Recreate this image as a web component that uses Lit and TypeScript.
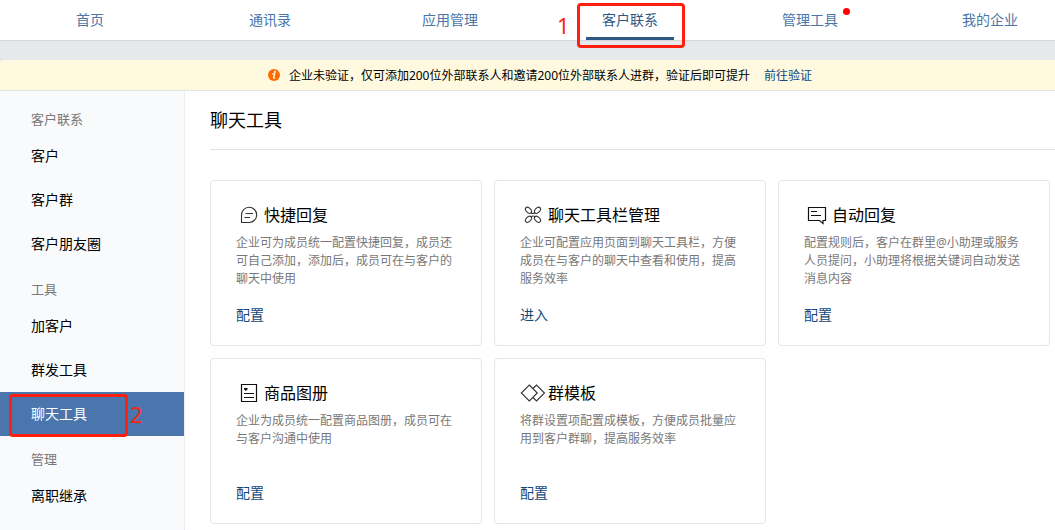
import { LitElement, html, css, svg, nothing, type TemplateResult } from "lit";
import { customElement, property } from "lit/decorators.js";
import { classMap } from "lit/directives/class-map.js";

type IconName = "reply" | "toolbar" | "auto" | "album" | "template";

interface Tool {
  icon: IconName;
  title: string;
  desc: string;
  action: string;
}

const TABS = ["首页", "通讯录", "应用管理", "客户联系", "管理工具", "我的企业"];
const ACTIVE_TAB = "客户联系";
const UNREAD_TAB = "管理工具";

const MENU = [
  { label: "客户联系", items: ["客户", "客户群", "客户朋友圈"] },
  { label: "工具", items: ["加客户", "群发工具", "聊天工具"] },
  { label: "管理", items: ["离职继承"] },
];
const ACTIVE_ITEM = "聊天工具";

const TOOLS: Tool[] = [
  {
    icon: "reply",
    title: "快捷回复",
    desc: "企业可为成员统一配置快捷回复，成员还可自己添加，添加后，成员可在与客户的聊天中使用",
    action: "配置",
  },
  {
    icon: "toolbar",
    title: "聊天工具栏管理",
    desc: "企业可配置应用页面到聊天工具栏，方便成员在与客户的聊天中查看和使用，提高服务效率",
    action: "进入",
  },
  {
    icon: "auto",
    title: "自动回复",
    desc: "配置规则后，客户在群里@小助理或服务人员提问，小助理将根据关键词自动发送消息内容",
    action: "配置",
  },
  {
    icon: "album",
    title: "商品图册",
    desc: "企业为成员统一配置商品图册，成员可在与客户沟通中使用",
    action: "配置",
  },
  {
    icon: "template",
    title: "群模板",
    desc: "将群设置项配置成模板，方便成员批量应用到客户群聊，提高服务效率",
    action: "配置",
  },
];

const ICONS: Record<IconName, TemplateResult<2>> = {
  reply: svg`
    <path d="M5.5 19.5V12a7.6 7.6 0 1 1 7.6 7.5Z" />
    <path d="M9.5 10.5h7.5M8.5 14.5h5.5" />`,
  toolbar: svg`
    <ellipse cx="8.5" cy="7.3" rx="3.6" ry="2.3" transform="rotate(45 8.5 7.3)" />
    <ellipse cx="17.5" cy="7.3" rx="3.6" ry="2.3" transform="rotate(-45 17.5 7.3)" />
    <ellipse cx="8.5" cy="16.3" rx="3.6" ry="2.3" transform="rotate(-45 8.5 16.3)" />
    <ellipse cx="17.5" cy="16.3" rx="3.6" ry="2.3" transform="rotate(45 17.5 16.3)" />
    <path d="M10.8 9.8q2.2 1.5 4.4 0M10.8 13.8q2.2-1.5 4.4 0" />`,
  auto: svg`
    <path class="dark" d="M4.5 4.5h17v13h-2.5v3l-3.5-3h-11Z" />
    <path class="dark" d="M7 8.5h6M7 12.5h10" />`,
  album: svg`
    <path class="dark" d="M5.5 3.5h15v17h-15Z" />
    <path class="dark" d="M8 12.5h10M8 16.5h10" />
    <path class="solid" d="M8 7h3.6v1.2l-1.8 1.8l-1.8-1.8Z" />`,
  template: svg`
    <path d="M9.3 4L17.3 12L9.3 20L1.3 12Z" />
    <path d="M13 7.5L16.5 4L24.5 12L16.5 20L13 16.5" />`,
};

@customElement("tool-card")
export class ToolCard extends LitElement {
  @property({ attribute: false }) tool!: Tool;

  static styles = css`
    :host {
      display: flex;
      flex-direction: column;
      box-sizing: border-box;
      padding: 22px 25px 20px;
      border: 1px solid #e4e6e9;
      border-radius: 4px;
      background: #fff;
    }
    .head {
      display: flex;
      align-items: center;
      height: 24px;
      margin-bottom: 7px;
    }
    .icon {
      flex: none;
      width: 28px;
      height: 24px;
      fill: none;
      stroke: #333;
      stroke-width: 1.1;
    }
    .dark {
      stroke: #111;
      stroke-width: 1.2;
    }
    .solid {
      fill: #111;
      stroke: none;
    }
    .title {
      margin: 0;
      font-size: 16px;
      font-weight: 400;
      line-height: 24px;
      color: #000;
    }
    .desc {
      margin: 0 0 17px;
      min-height: 54px;
      font-size: 12px;
      line-height: 18px;
      color: #787878;
    }
    .action {
      align-self: flex-start;
      font-size: 14px;
      line-height: 20px;
      color: #0d4a80;
      text-decoration: none;
    }
  `;

  render() {
    const { icon, title, desc, action } = this.tool;
    return html`
      <div class="head">
        <svg class="icon" viewBox="0 0 28 24" aria-hidden="true">${ICONS[icon]}</svg>
        <h2 class="title">${title}</h2>
      </div>
      <p class="desc">${desc}</p>
      <a class="action" href="#">${action}</a>
    `;
  }
}

@customElement("app-root")
export class AppRoot extends LitElement {
  static styles = css`
    :host {
      display: block;
      min-height: 100vh;
      overflow: hidden;
      background: #e7e8eb;
      font-family: "Noto Sans", "Noto Sans CJK SC", sans-serif;
      color: #000;
    }
    .page {
      display: flex;
      flex-direction: column;
      min-width: 1080px;
      min-height: 100vh;
    }
    a {
      text-decoration: none;
    }
    .tabs {
      display: grid;
      grid-template-columns: repeat(6, 1fr);
      height: 40px;
      margin-bottom: 19px;
      border-bottom: 1px solid #d6d7da;
      background: #fff;
    }
    .tab {
      position: relative;
      display: flex;
      justify-content: center;
    }
    .tab-link {
      position: relative;
      box-sizing: border-box;
      height: 40px;
      padding: 0 16px;
      font-size: 14px;
      line-height: 40px;
      color: #4a76a8;
    }
    .tab-link.active {
      border-bottom: 3px solid #2e5783;
      color: #2e5783;
    }
    .dot {
      position: absolute;
      top: 8px;
      right: 4px;
      width: 7px;
      height: 7px;
      border-radius: 50%;
      background: #f00;
    }
    .mark {
      position: absolute;
      z-index: 1;
      box-sizing: border-box;
      border: 3px solid #ff1f10;
      border-radius: 4px;
      pointer-events: none;
    }
    .mark-no {
      position: absolute;
      z-index: 1;
      font-size: 22px;
      line-height: 24px;
      color: #ff1f10;
    }
    .tab .mark {
      top: 3px;
      left: 37px;
      right: 35px;
      height: 45px;
    }
    .tab .mark-no {
      top: 13px;
      left: 17px;
    }
    .notice {
      display: flex;
      align-items: center;
      justify-content: center;
      height: 30px;
      border-bottom: 1px solid #e1e3e6;
      border-radius: 4px 4px 0 0;
      background: #fff9e0;
      font-size: 12px;
      line-height: 18px;
    }
    .info {
      width: 12px;
      height: 12px;
      margin-right: 9px;
    }
    .notice-text,
    .notice-link {
      padding-top: 2px;
    }
    .notice-link {
      margin-left: 14px;
      color: #0d4a80;
    }
    .body {
      display: flex;
      flex: 1;
      background: #fff;
    }
    .side {
      flex: none;
      width: 184px;
      padding-top: 5px;
      border-right: 1px dotted #dde0e4;
      background: #f9fafc;
    }
    .group-label {
      margin: 10px 0 2px;
      padding-left: 31px;
      font-size: 13px;
      font-weight: 400;
      line-height: 26px;
      color: #787878;
    }
    .group-list {
      margin: 0;
      padding: 0;
      list-style: none;
    }
    .item {
      position: relative;
    }
    .item-link {
      display: block;
      padding-left: 31px;
      font-size: 14px;
      line-height: 44px;
      color: #000;
    }
    .item-link.active {
      background: #4a76ad;
      color: #fff;
    }
    .item .mark {
      top: 2px;
      left: 9px;
      width: 119px;
      height: 43px;
    }
    .item .mark-no {
      top: 10px;
      left: 130px;
    }
    .main {
      flex: 1;
      padding-left: 25px;
    }
    .heading {
      margin: 0 0 30px;
      border-bottom: 1px solid #dfe1e3;
      font-size: 18px;
      font-weight: 400;
      line-height: 58px;
    }
    .cards {
      display: grid;
      grid-template-columns: repeat(auto-fill, minmax(260px, 1fr));
      gap: 12px;
      padding: 0 30px 30px 0;
    }
  `;

  private renderMark(no: number) {
    return html`<span class="mark"></span><span class="mark-no">${no}</span>`;
  }

  private renderTab(name: string) {
    const active = name === ACTIVE_TAB;
    return html`
      <div class="tab">
        <a class=${classMap({ "tab-link": true, active })} href="#"
          >${name}${name === UNREAD_TAB ? html`<span class="dot"></span>` : nothing}</a
        >
        ${active ? this.renderMark(1) : nothing}
      </div>
    `;
  }

  private renderItem(name: string) {
    const active = name === ACTIVE_ITEM;
    return html`
      <li class="item">
        <a class=${classMap({ "item-link": true, active })} href="#">${name}</a>
        ${active ? this.renderMark(2) : nothing}
      </li>
    `;
  }

  render() {
    return html`
      <div class="page">
        <nav class="tabs">${TABS.map((name) => this.renderTab(name))}</nav>
        <div class="notice">
          <svg class="info" viewBox="0 0 12 12" aria-hidden="true">
            <circle cx="6" cy="6" r="6" fill="#ff6a00" />
            <circle cx="6.9" cy="2.8" r="1.1" fill="#fff" />
            <path
              d="M4.2 4.9h2.4L5.6 8.9q0 .6 1.5-.2"
              fill="none"
              stroke="#fff"
              stroke-width="1.3"
            />
          </svg>
          <span class="notice-text"
            >企业未验证，仅可添加200位外部联系人和邀请200位外部联系人进群，验证后即可提升</span
          >
          <a class="notice-link" href="#">前往验证</a>
        </div>
        <div class="body">
          <aside class="side">
            ${MENU.map(
              (group) => html`
                <h3 class="group-label">${group.label}</h3>
                <ul class="group-list">
                  ${group.items.map((name) => this.renderItem(name))}
                </ul>
              `
            )}
          </aside>
          <main class="main">
            <h1 class="heading">聊天工具</h1>
            <div class="cards">
              ${TOOLS.map((tool) => html`<tool-card .tool=${tool}></tool-card>`)}
            </div>
          </main>
        </div>
      </div>
    `;
  }
}
